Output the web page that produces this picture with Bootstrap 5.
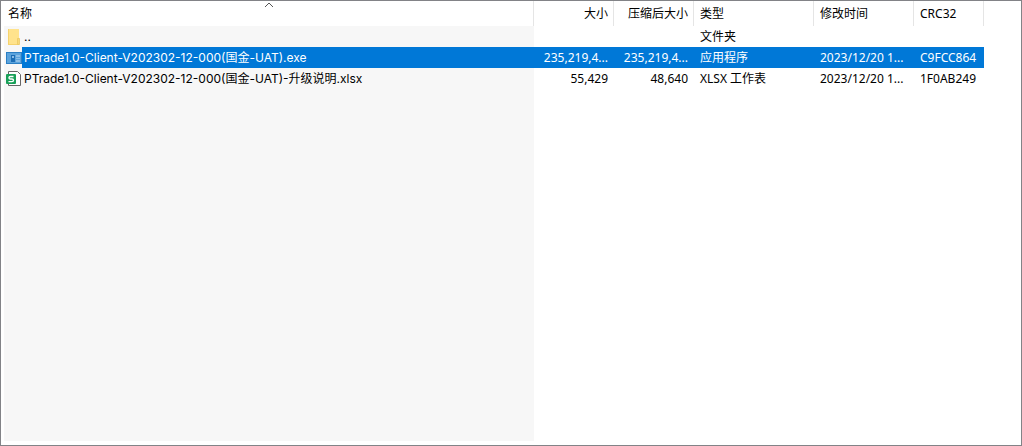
<!DOCTYPE html>
<html lang="zh-CN">
<head>
<meta charset="utf-8">
<meta name="viewport" content="width=device-width, initial-scale=1">
<title>PTrade1.0-Client</title>
<link href="https://cdn.jsdelivr.net/npm/bootstrap@5.3.0/dist/css/bootstrap.min.css" rel="stylesheet">
<style>
  body { font-family: "Noto Sans", "Noto Sans CJK SC", sans-serif; font-size: 12px; line-height: 20px; color: #000; background: #fff; }
  .archive { border: 1px solid #828387; padding: 0 0 4px 3px; }
  .file-table { table-layout: fixed; height: calc(100vh - 6px); border-collapse: separate; border-spacing: 0; }
  .file-table th, .file-table td { padding: 0 6px; height: 21px; vertical-align: middle; white-space: nowrap; overflow: hidden; text-overflow: ellipsis; }
  .file-table thead th { height: 25px; font-weight: 400; padding-right: 5px; border-right: 1px solid #e5e5e5; }
  .file-table thead th:first-child { padding-left: 4px; }
  .file-table thead th:last-child { border-right: 0; }
  .file-table .name-cell { background: #f7f7f7; padding: 0 0 0 2px; }
  .file-table .picked td:not(:last-child) { background: #0078d7; color: #fff; }
  .file-table .picked .name-cell:not(:last-child) { background: #f7f7f7; }
  .picked .file-name { background: #0078d7; }
  .file-name { padding-left: 2px; line-height: 21px; }
  .file-table .filler td { height: auto; }
  .col-size { width: 80px; }
  .col-kind { width: 120px; }
  .col-time { width: 100px; }
  .col-crc { width: 70px; }
  .col-rest { width: 37px; }
  .sort-btn { border: 0; padding: 0; background: none; color: inherit; }
  .name-cell .file-name { font-family: "Inter", "Noto Sans CJK SC", sans-serif; }
</style>
</head>
<body>
<main class="archive min-vh-100">
  <table class="file-table w-100">
    <colgroup>
      <col><col class="col-size"><col class="col-size"><col class="col-kind"><col class="col-time"><col class="col-crc"><col class="col-rest">
    </colgroup>
    <thead>
      <tr>
        <th scope="col" aria-sort="ascending" class="position-relative">
          <button type="button" class="sort-btn">名称</button>
          <svg class="position-absolute top-0 start-50 translate-middle-x" width="10" height="7" viewBox="0 0 10 7" fill="none" stroke="#555" aria-hidden="true"><path d="M1 6 5 2l4 4"/></svg>
        </th>
        <th scope="col" class="text-end"><button type="button" class="sort-btn">大小</button></th>
        <th scope="col" class="text-end"><button type="button" class="sort-btn">压缩后大小</button></th>
        <th scope="col"><button type="button" class="sort-btn">类型</button></th>
        <th scope="col"><button type="button" class="sort-btn">修改时间</button></th>
        <th scope="col"><button type="button" class="sort-btn">CRC32</button></th>
        <th></th>
      </tr>
    </thead>
    <tbody>
      <tr>
        <td class="name-cell">
          <div class="d-flex align-items-center">
            <svg class="flex-shrink-0" width="16" height="16" viewBox="0 0 16 16" aria-hidden="true"><path fill="#ffe38c" d="M2 0h11v16H2z"/><path fill="#f6d36d" d="M2 0h1v16H2zM2 15h11v1H2z"/><path fill="#f9d978" stroke="#eac65f" stroke-width=".7" d="M11.5 9.5h2v6h-2z"/></svg>
            <span class="file-name flex-fill">..</span>
          </div>
        </td>
        <td></td><td></td><td>文件夹</td><td></td><td></td><td></td>
      </tr>
      <tr class="picked">
        <td class="name-cell">
          <div class="d-flex align-items-center">
            <svg class="flex-shrink-0" width="16" height="16" viewBox="0 0 16 16" aria-hidden="true"><path fill="#2b7fc4" d="M0 2h16v12H0z"/><path fill="#5ba3dc" d="M1 3h14v10H1z"/><path fill="#1c6db5" d="M5 5h4v7H5z"/><path fill="#8abde6" d="M10 5h4v2h-4zM10 8h4v1h-4zM10 10h4v2h-4zM6 6h2v2H6z"/></svg>
            <span class="file-name flex-fill">PTrade1.0-Client-V202302-12-000(国金-UAT).exe</span>
          </div>
        </td>
        <td class="text-end">235,219,4...</td><td class="text-end">235,219,4...</td><td>应用程序</td><td>2023/12/20 1...</td><td>C9FCC864</td><td></td>
      </tr>
      <tr>
        <td class="name-cell">
          <div class="d-flex align-items-center">
            <svg class="flex-shrink-0" width="16" height="16" viewBox="0 0 16 16" aria-hidden="true"><path fill="#fff" stroke="#666" d="M2.5.5h9l3 3v11h-12z"/><rect y="3" width="10" height="10" rx="1" fill="#18a058"/><path fill="none" stroke="#fff" stroke-width="1.4" d="M7.500 5.500H4.500Q3 5.500 3 6.800T4.500 8h1.500Q7.500 8 7.500 9.300T6 10.600H2.500"/></svg>
            <span class="file-name flex-fill">PTrade1.0-Client-V202302-12-000(国金-UAT)-升级说明.xlsx</span>
          </div>
        </td>
        <td class="text-end">55,429</td><td class="text-end">48,640</td><td>XLSX 工作表</td><td>2023/12/20 1...</td><td>1F0AB249</td><td></td>
      </tr>
      <tr class="filler"><td class="name-cell"></td><td colspan="6"></td></tr>
    </tbody>
  </table>
</main>
<script src="https://cdn.jsdelivr.net/npm/bootstrap@5.3.0/dist/js/bootstrap.bundle.min.js"></script>
</body>
</html>
